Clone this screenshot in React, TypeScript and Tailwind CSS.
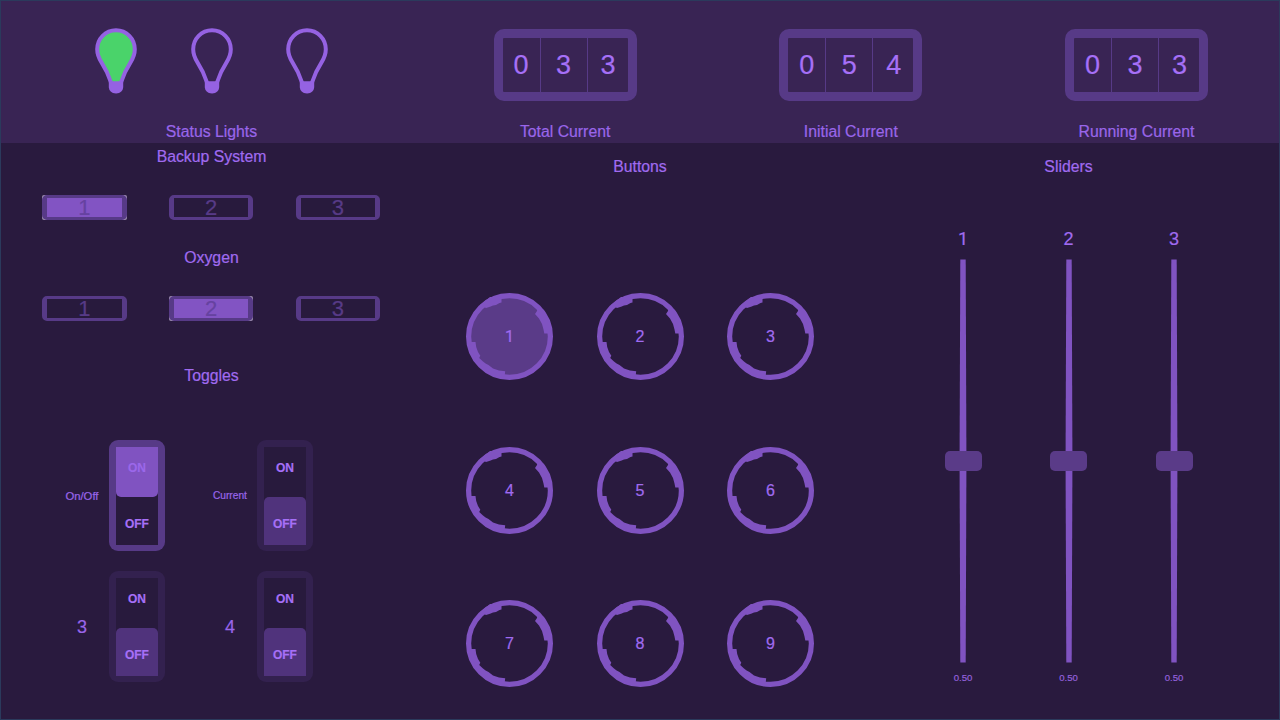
import React from "react";

const BULB =
  "M21 2.2C10.4 2.2 2.2 10.8 2.2 21.3C2.2 26.5 4 30.6 6.6 34.6C10 39.8 13.2 45.5 16 54.5C17 59 18.4 62.6 21 62.6C23.6 62.6 25 59 26 54.5C28.8 45.5 32 39.8 35.4 34.6C38 30.6 39.8 26.5 39.8 21.3C39.8 10.8 31.6 2.2 21 2.2Z";

function Bulb({ lit }: { lit?: boolean }) {
  return (
    <svg width="42" height="66" viewBox="0 0 42 66" className="block">
      <path d={BULB} fill={lit ? "#4ad36a" : "none"} stroke="#9562e2" strokeWidth="4" />
      <path d="M13.8 53.2H28.2V58.5C28.2 62.8 25.5 65.4 21 65.4C16.5 65.4 13.8 62.8 13.8 58.5Z" fill="#9562e2" />
    </svg>
  );
}

// Plain numerals: Roboto draws the "1" without a foot serif.
function Num({ n }: { n: string }) {
  return n === "1" ? <span className="font-[Roboto,sans-serif]">1</span> : <span>{n}</span>;
}

function Meter({ digits, label }: { digits: string[]; label: string }) {
  return (
    <div className="flex flex-1 flex-col items-center pt-[28px] pl-[0.6px]">
      <div className="grid h-[72px] w-[143px] grid-cols-[38px_47px_40px] rounded-[10px] border-9 border-[#573a87] text-[27px] leading-[55px] text-[#a670f7]">
        {digits.map((d, i) => (
          <div key={i} className={i < 2 ? "border-r border-[#573a87] text-center" : "pl-px text-center"}>
            {d}
          </div>
        ))}
      </div>
      <div className="mt-[19px] text-[15.8px] leading-6 text-[#9a66ea]">{label}</div>
    </div>
  );
}

function Chips({ active }: { active: number }) {
  return (
    <div className="flex w-full justify-between pr-[42px] pl-[41px]">
      {[1, 2, 3].map((n) => {
        const on = n === active;
        return (
          <div key={n} className={on ? "rounded-[2px] bg-[#9a8bae]" : "rounded-[4px]"}>
            <div
              className={
                "h-[25px] w-[84.5px] rounded-[5px] border-x-[5px] border-y-[3px] border-[#573a87] text-center text-[22px] leading-[19px] " +
                (on ? "bg-[#8254c3] text-[#6642a0]" : "bg-[#281a3d] text-[#573a87]")
              }
            >
              {n}
            </div>
          </div>
        );
      })}
    </div>
  );
}

function Toggle({ label, size, on }: { label: string; size: string; on?: boolean }) {
  return (
    <div className="flex items-center">
      <div className={"w-[56.5px] pl-[2px] text-center text-[#9a66ea] " + size}>{label}</div>
      <div className={"h-[111px] w-[55.5px] rounded-[9px] p-[6.5px] " + (on ? "bg-[#573a87]" : "bg-[#33214f]")}>
        <div className="flex h-full flex-col bg-[#281a3d] text-xs font-bold text-[#a670f7]">
          <div
            className={
              "flex flex-1 items-center justify-center pb-[8px] " +
              (on ? "rounded-b-[5px] bg-[#8053c1] text-[#9b68ea]" : "")
            }
          >
            ON
          </div>
          <div
            className={"flex flex-1 items-center justify-center pt-[6px] " + (on ? "" : "rounded-t-[5px] bg-[#50337c]")}
          >
            OFF
          </div>
        </div>
      </div>
    </div>
  );
}

// Raised pads on the inner edge of the button ring.
const PADS =
  "M20 15L24 13.8L27 12.6L30 12L33.5 10L35.5 9.5V4H24L14 12Z" +
  "M69 21L73 25.5L76 31L77.5 36.5L78.3 40.5H83V30L78 17L72 14L71 18Z" +
  "M4 49H9.5L10.2 54L12 59L14.3 62.8L13.2 65L17 68.5L19.6 70.5L22.5 72L27 75.5L33 77.5L39.2 78.3L38.6 83.5L26 81L12 70L5 57Z";

function RoundButton({ n }: { n: number }) {
  return (
    <div className="grid h-[87px] w-[87px] place-items-center">
      <svg viewBox="0 0 87 87" className="col-start-1 row-start-1 h-[87px] w-[87px]">
        <circle cx="43.5" cy="43.5" r="40.9" fill={n === 1 ? "#5a3b88" : "none"} stroke="#8053c1" strokeWidth="5.2" />
        <path d={PADS} fill="#8053c1" />
      </svg>
      <div className="col-start-1 row-start-1 pt-px text-base leading-6 text-[#a06bf0]">
        <Num n={String(n)} />
      </div>
    </div>
  );
}

function Slider({ n }: { n: number }) {
  return (
    <div className="flex w-[37px] flex-col items-center">
      <div className="h-6 text-lg leading-6 text-[#a06bf0]">
        <Num n={String(n)} />
      </div>
      <div className="mt-[8px] grid h-[404px] w-full place-items-center">
        <svg viewBox="0 0 8 404" className="col-start-1 row-start-1 h-[404px] w-[8px]">
          <path d="M1.3 0.5H6.7L7.4 190V214L6.7 403.5H1.3L0.6 214V190Z" fill="#8053c1" />
        </svg>
        <div className="col-start-1 row-start-1 h-[20px] w-[37px] rounded-[5px] bg-[#5a3b88]" />
      </div>
      <div className="mt-[9px] text-[9.6px] leading-3 text-[#9461dc]">0.50</div>
    </div>
  );
}

export default function App() {
  return (
    <div className="flex h-[720px] w-[1280px] flex-col overflow-hidden border border-[#2b3a5c] bg-[#291a3e] font-[Liberation_Sans,Arial,sans-serif] [-webkit-text-stroke:0.2px_currentColor]">
      <header className="flex h-[142px] shrink-0 bg-[#392454]">
        <section className="flex w-[421px] flex-col items-center pt-[27px]">
          <div className="flex gap-[53.2px]">
            <Bulb lit />
            <Bulb />
            <Bulb />
          </div>
          <div className="mt-[26px] text-[15.8px] leading-6 text-[#9a66ea]">Status Lights</div>
        </section>
        <Meter digits={["0", "3", "3"]} label="Total Current" />
        <Meter digits={["0", "5", "4"]} label="Initial Current" />
        <Meter digits={["0", "3", "3"]} label="Running Current" />
      </header>
      <main className="flex flex-1 text-[15.8px] leading-6 text-[#a06bf0]">
        <section className="flex w-[421px] flex-col items-center pt-[2px]">
          <h2>Backup System</h2>
          <div className="mt-[26px] w-full">
            <Chips active={1} />
          </div>
          <h2 className="mt-[26px]">Oxygen</h2>
          <div className="mt-[26px] w-full">
            <Chips active={2} />
          </div>
          <h2 className="mt-[42.5px]">Toggles</h2>
          <div className="mt-[52.5px] grid w-full grid-cols-[112px_112px] gap-x-[36px] gap-y-[20px] pl-[51.7px]">
            <Toggle label="On/Off" size="text-[11.3px]" on />
            <Toggle label="Current" size="text-[10.2px]" />
            <Toggle label="3" size="text-lg" />
            <Toggle label="4" size="text-lg" />
          </div>
        </section>
        <section className="flex w-[436px] flex-col items-center pt-[12px]">
          <h2>Buttons</h2>
          <div className="mt-[114px] grid grid-cols-[87px_87px_87px] gap-x-[43.5px] gap-y-[66.5px]">
            {[1, 2, 3, 4, 5, 6, 7, 8, 9].map((n) => (
              <RoundButton key={n} n={n} />
            ))}
          </div>
        </section>
        <section className="flex flex-1 flex-col items-center pt-[12px]">
          <h2>Sliders</h2>
          <div className="mt-[48px] flex gap-[68.5px]">
            <Slider n={1} />
            <Slider n={2} />
            <Slider n={3} />
          </div>
        </section>
      </main>
    </div>
  );
}
